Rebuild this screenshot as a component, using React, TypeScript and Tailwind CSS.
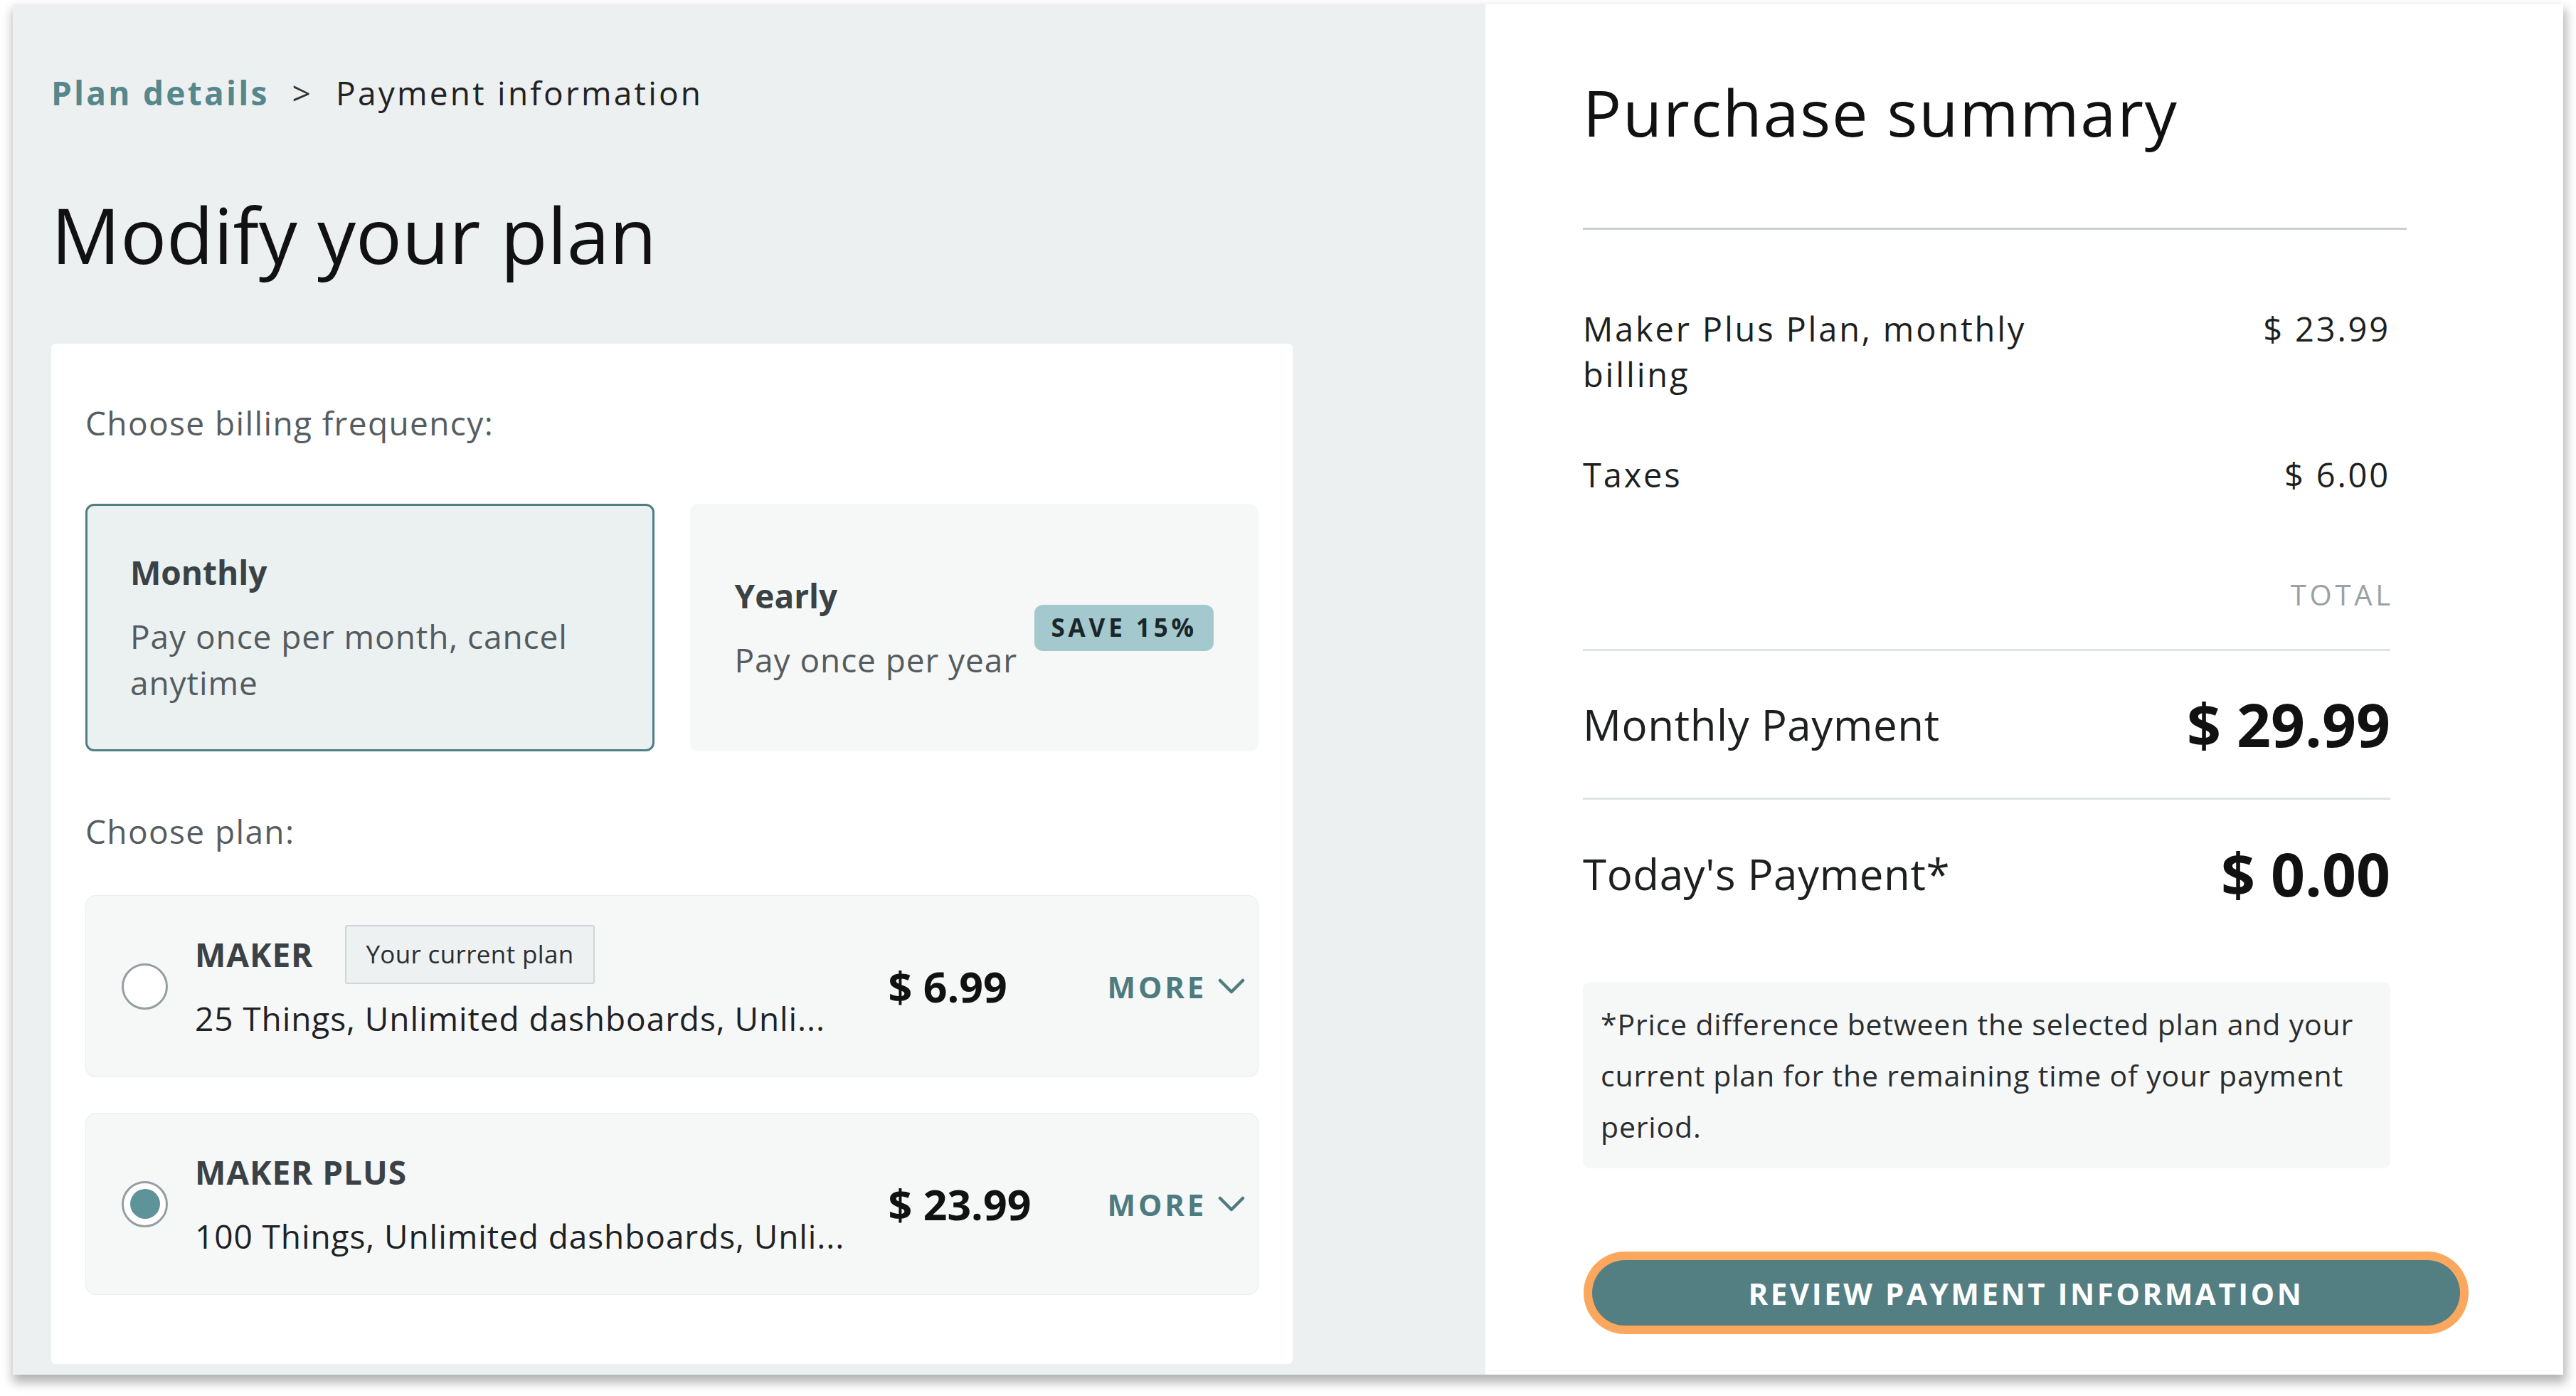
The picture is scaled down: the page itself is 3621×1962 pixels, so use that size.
import React from "react";

type Plan = {
  name: string;
  desc: string;
  price: string;
  current: boolean;
  selected: boolean;
};

const PLANS: Plan[] = [
  {
    name: "MAKER",
    desc: "25 Things, Unlimited dashboards, Unli...",
    price: "$ 6.99",
    current: true,
    selected: false,
  },
  {
    name: "MAKER PLUS",
    desc: "100 Things, Unlimited dashboards, Unli...",
    price: "$ 23.99",
    current: false,
    selected: true,
  },
];

function Chevron() {
  return (
    <svg width="38" height="22" viewBox="0 0 38 22" fill="none">
      <polyline
        points="3,3 19,19 35,3"
        stroke="currentColor"
        strokeWidth="4.5"
        strokeLinecap="round"
        strokeLinejoin="round"
      />
    </svg>
  );
}

function Radio({ checked }: { checked: boolean }) {
  return (
    <div className="flex h-[65px] w-[65px] shrink-0 items-center justify-center rounded-full border-[3px] border-[#959ea1] bg-white">
      {checked && <div className="h-[42px] w-[42px] rounded-full bg-[#5f939a]" />}
    </div>
  );
}

function PlanCard({ plan }: { plan: Plan }) {
  return (
    <div className="flex h-[256px] items-center rounded-[14px] border border-[#e9eded] bg-[#f6f8f8] pl-[50px] pr-[18px]">
      <Radio checked={plan.selected} />
      <div className="ml-[38px] min-w-0 flex-1">
        <div className="flex h-[64px] items-center gap-[45px]">
          <span className="text-[46px] font-bold tracking-[0.02em] text-[#3b4246]">{plan.name}</span>
          {plan.current && (
            <span className="flex h-[83px] items-center rounded-[3px] border-2 border-[#cfd5d6] bg-[#eef1f1] px-[27px] text-[35px] tracking-[0.01em] text-[#2b2f31]">
              Your current plan
            </span>
          )}
        </div>
        <div className="mt-[26px] whitespace-nowrap text-[46px] leading-[64px] tracking-[0.02em] text-[#1f2224]">
          {plan.desc}
        </div>
      </div>
      <div className="w-[308px] shrink-0 text-[59px] font-bold text-[#111]">{plan.price}</div>
      <button className="flex items-center gap-[16px] text-[42px] font-bold tracking-[0.09em] text-[#4e7b80]">
        MORE
        <Chevron />
      </button>
    </div>
  );
}

function LeftPanel() {
  return (
    <div className="flex w-[2070px] shrink-0 flex-col bg-[#ecf0f1] pl-[54px] pt-[92px] pb-[15px]">
      <nav className="flex items-center text-[46px] leading-[64px] tracking-[0.07em]">
        <span className="font-bold text-[#55878c]">Plan details</span>
        <span className="mx-[32px] text-[#333]">&gt;</span>
        <span className="text-[#222]">Payment information</span>
      </nav>
      <h1 className="mt-[103px] text-[108px] leading-[130px] text-[#111]">Modify your plan</h1>

      <div className="mt-[88px] w-[1745px] flex-1 rounded-[6px] bg-white px-[48px] pt-[79px] pb-[97px]">
        <p className="text-[46px] leading-[64px] tracking-[0.03em] text-[#565d61]">
          Choose billing frequency:
        </p>
        <div className="mt-[82px] grid h-[348px] grid-cols-2 gap-[50px]">
          <div className="flex flex-col justify-center rounded-[12px] border-[3px] border-[#4f7f83] bg-[#eaf1f0] px-[60px]">
            <div className="text-[46px] font-bold leading-[64px] text-[#3b4246]">Monthly</div>
            <div className="mt-[26px] text-[46px] leading-[65px] tracking-[0.02em] text-[#555b5e]">
              Pay once per month, cancel anytime
            </div>
          </div>
          <div className="flex items-center justify-between rounded-[12px] border-[3px] border-transparent bg-[#f6f8f8] px-[60px]">
            <div>
              <div className="text-[46px] font-bold leading-[64px] text-[#3b4246]">Yearly</div>
              <div className="mt-[26px] text-[46px] leading-[64px] tracking-[0.02em] text-[#555b5e]">
                Pay once per year
              </div>
            </div>
            <span className="flex h-[65px] items-center rounded-[12px] bg-[#a3c8cd] px-[23px] text-[35px] font-bold tracking-[0.14em] text-[#1c2629]">
              SAVE 15%
            </span>
          </div>
        </div>

        <p className="mt-[80px] text-[46px] leading-[64px] tracking-[0.03em] text-[#565d61]">Choose plan:</p>
        <div className="mt-[58px] flex flex-col gap-[50px]">
          {PLANS.map((p) => (
            <PlanCard key={p.name} plan={p} />
          ))}
        </div>
      </div>
    </div>
  );
}

function RightPanel() {
  return (
    <div className="flex-1 bg-white pl-[137px] pt-[97px]">
      <h2 className="text-[90px] leading-[108px] tracking-[0.02em] text-[#111]">Purchase summary</h2>
      <div className="mt-[109px] h-[3px] w-[1158px] bg-[#c9cecf]" />

      <div className="w-[1135px] text-[#1d1f20]">
        <div className="mt-[107px] flex items-start justify-between text-[47px] leading-[64px] tracking-[0.06em]">
          <span className="w-[680px]">Maker Plus Plan, monthly billing</span>
          <span>$ 23.99</span>
        </div>
        <div className="mt-[77px] flex justify-between text-[47px] leading-[64px] tracking-[0.06em]">
          <span>Taxes</span>
          <span>$ 6.00</span>
        </div>
        <div className="mt-[109px] flex justify-end">
          <span className="-mr-[5px] text-[40px] leading-[56px] tracking-[0.12em] text-[#9aa1a4]">TOTAL</span>
        </div>
        <div className="mt-[48px] h-[3px] bg-[#dfe3e4]" />
        <div className="flex h-[206px] items-center justify-between">
          <span className="text-[60px] tracking-[0.01em]">Monthly Payment</span>
          <span className="text-[84px] font-bold text-[#111]">$ 29.99</span>
        </div>
        <div className="h-[3px] bg-[#dfe3e4]" />
        <div className="flex h-[208px] items-center justify-between">
          <span className="text-[60px] tracking-[0.01em]">Today's Payment*</span>
          <span className="text-[84px] font-bold text-[#111]">$ 0.00</span>
        </div>

        <div className="mt-[48px] rounded-[10px] bg-[#f6f8f8] px-[25px] py-[23px] text-[41px] leading-[72px] tracking-[0.02em] text-[#2a2d2f]">
          *Price difference between the selected plan and your current plan for the remaining time of your payment
          period.
        </div>
      </div>

      <button className="ml-[13px] mt-[129px] flex h-[92px] w-[1220px] items-center justify-center rounded-full bg-[#537f83] text-[42px] font-bold tracking-[0.085em] text-white ring-[12px] ring-[#fba85e]">
        REVIEW PAYMENT INFORMATION
      </button>
    </div>
  );
}

export default function App() {
  return (
    <div className="h-[1962px] w-[3621px] overflow-hidden bg-white pl-[18px] pt-[6px] font-['Open_Sans',sans-serif]">
      <div className="flex h-[1926px] w-[3585px] shadow-[2px_9px_14px_2px_rgba(0,0,0,0.3)]">
        <LeftPanel />
        <RightPanel />
      </div>
    </div>
  );
}
